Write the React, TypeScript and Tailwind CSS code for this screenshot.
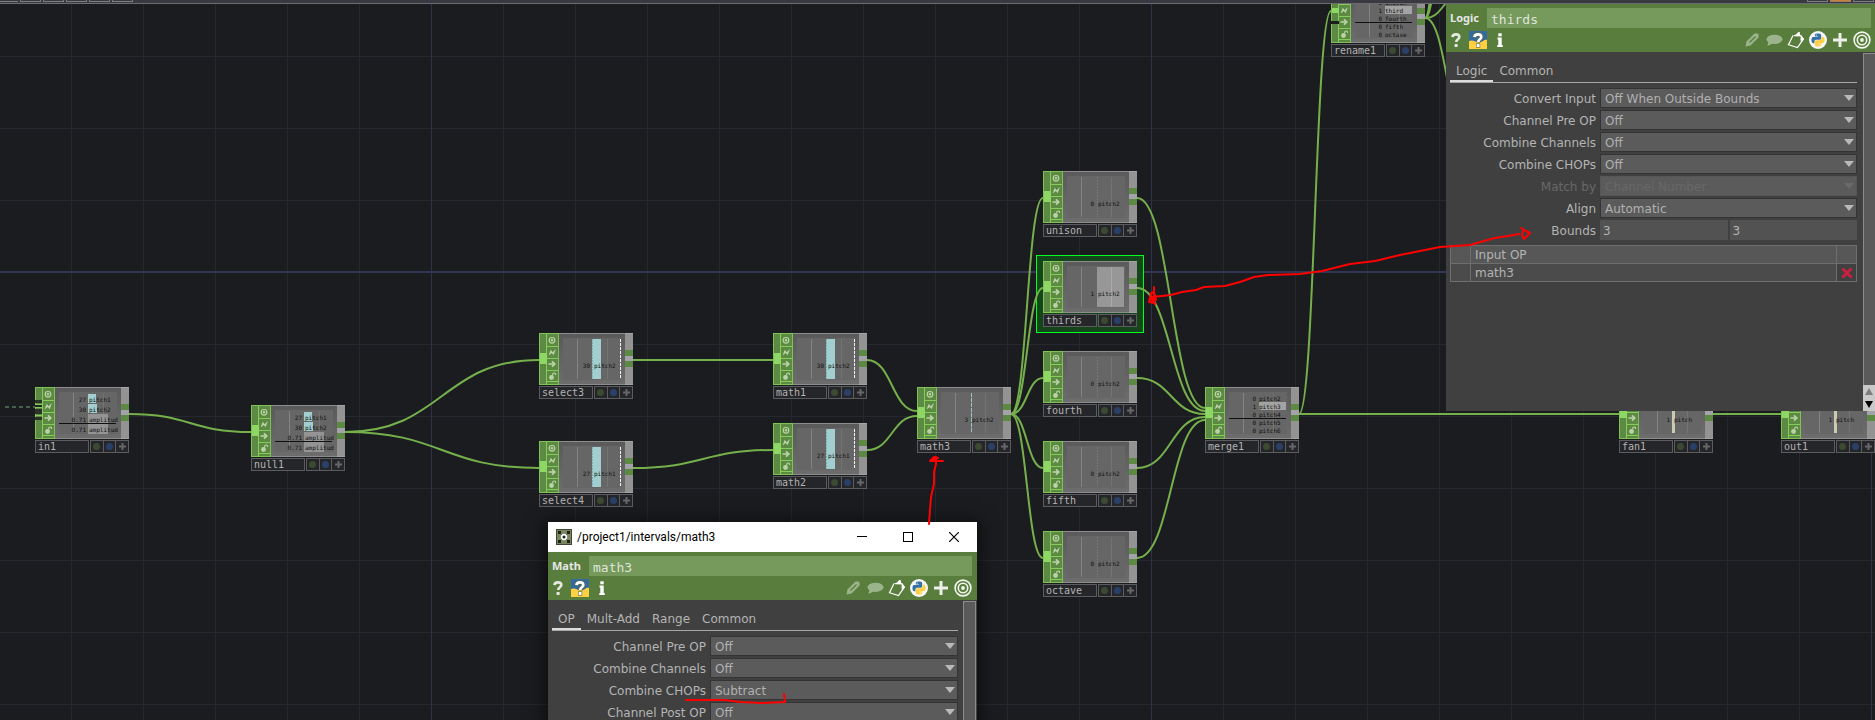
import { useId } from "react";
import type { ReactNode } from "react";

/* ---------- Network nodes ---------- */

type Row = { value: string; name: string; bar?: "cyan" | "grey" | "highlight" };

type NodeSpec = {
  name: string;
  place: string;
  inputs?: "single" | "multi" | "pair";
  value?: string;
  channel?: string;
  fill?: "cyan" | "line" | "grey" | "cream";
  rows?: Row[];
  selected?: boolean;
};

const amplitudeRows: Row[] = [
  { value: "27", name: "pitch1", bar: "cyan" },
  { value: "30", name: "pitch2", bar: "cyan" },
  { value: "0.71", name: "amplitud", bar: "grey" },
  { value: "0.71", name: "amplitud", bar: "grey" },
];

const nodes: NodeSpec[] = [
  { name: "in1", place: "left-[35px] top-[387px]", inputs: "multi", rows: amplitudeRows },
  { name: "null1", place: "left-[251px] top-[405px]", rows: amplitudeRows },
  { name: "select3", place: "left-[539px] top-[333px]", value: "30", channel: "pitch2", fill: "cyan" },
  { name: "select4", place: "left-[539px] top-[441px]", value: "27", channel: "pitch1", fill: "cyan" },
  { name: "math1", place: "left-[773px] top-[333px]", value: "30", channel: "pitch2", fill: "cyan" },
  { name: "math2", place: "left-[773px] top-[423px]", value: "27", channel: "pitch1", fill: "cyan" },
  { name: "math3", place: "left-[917px] top-[387px]", value: "3", channel: "pitch2", fill: "line" },
  { name: "unison", place: "left-[1043px] top-[171px]", value: "0", channel: "pitch2" },
  { name: "thirds", place: "left-[1043px] top-[261px]", value: "1", channel: "pitch2", fill: "grey", selected: true },
  { name: "fourth", place: "left-[1043px] top-[351px]", value: "0", channel: "pitch2" },
  { name: "fifth", place: "left-[1043px] top-[441px]", value: "0", channel: "pitch2" },
  { name: "octave", place: "left-[1043px] top-[531px]", value: "0", channel: "pitch2" },
  {
    name: "merge1",
    place: "left-[1205px] top-[387px]",
    rows: [
      { value: "0", name: "pitch2" },
      { value: "1", name: "pitch3", bar: "highlight" },
      { value: "0", name: "pitch4" },
      { value: "0", name: "pitch5" },
      { value: "0", name: "pitch6" },
    ],
  },
  {
    name: "rename1",
    place: "left-[1331px] top-[-9px]",
    inputs: "pair",
    rows: [
      { value: "0", name: "unison" },
      { value: "1", name: "third", bar: "highlight" },
      { value: "0", name: "fourth" },
      { value: "0", name: "fifth" },
      { value: "0", name: "octave" },
    ],
  },
  { name: "fan1", place: "left-[1619px] top-[387px]", value: "1", channel: "pitch", fill: "cream" },
  { name: "out1", place: "left-[1781px] top-[387px]", value: "1", channel: "pitch", fill: "cream" },
];

function NodeFlags({ inputs }: { inputs: NodeSpec["inputs"] }) {
  return (
    <svg width="20" height="52" className="block shrink-0" aria-hidden="true">
      <rect width="20" height="52" fill="#5d8a42" />
      <rect x="0.5" y="0.5" width="19" height="51" fill="none" stroke="#7fc256" />
      <path d="M7.5 0V52M8 13.5H19M8 25.5H19M8 37.5H19M8 48.5H19" stroke="#86cc5a" fill="none" />
      {inputs === "single" && <rect x="1" y="20" width="7" height="11" fill="#8fd765" />}
      {inputs === "multi" && (
        <g>
          <path d="M0 17.5H7M0 20.5H7M0 28.5H7" stroke="#86cc5a" />
          <rect x="0" y="13" width="7" height="3" fill="#2b3327" />
          <rect x="0" y="18" width="7" height="2" fill="#1f241e" />
          <rect x="0" y="22" width="7" height="5" fill="#2b3327" />
          <rect x="0" y="30" width="7" height="3" fill="#2b3327" />
        </g>
      )}
      {inputs === "pair" && (
        <g>
          <rect x="1" y="17" width="7" height="5" fill="#8fd765" />
          <rect x="0" y="30" width="8" height="3" fill="#1b1f1a" />
        </g>
      )}
      <circle cx="13" cy="7.3" r="2.8" fill="none" stroke="#b9d3a6" strokeWidth="1.2" />
      <circle cx="13" cy="7.3" r="1.2" fill="#b9d3a6" />
      <path d="M9.500 22.500L11.800 16.800L13.600 19.200L17 16L14.600 22.200L12.900 20Z" fill="#b9d3a6" />
      <path d="M9.500 31H15M13 28.300L15.800 31L13 33.700" fill="none" stroke="#b9d3a6" strokeWidth="1.700" />
      <path d="M13.700 42.500V41A1.500 1.500 0 0 1 16.500 40.800V42" fill="none" stroke="#b9d3a6" strokeWidth="1.100" />
      <circle cx="12.500" cy="44.500" r="2.400" fill="#b9d3a6" />
    </svg>
  );
}

function NodeViewer({ node }: { node: NodeSpec }) {
  const clip = useId();
  const many = node.rows !== undefined && node.rows.length === 5;
  const step = many ? 8 : 10;
  const first = many ? 14 : 15;
  return (
    <svg width="66" height="52" className="block flex-1" aria-label={node.name + " viewer"}>
      <defs>
        <linearGradient id={clip + "g"} x1="0" x2="0" y1="0" y2="1">
          <stop offset="0" stopColor="#5a5a5a" />
          <stop offset="1" stopColor="#6d6d6d" />
        </linearGradient>
      </defs>
      <rect width="66" height="52" fill={`url(#${clip}g)`} />
      <path d="M0 0.5H66M0 51.5H66" stroke="#8d8d8d" />
      <rect x="4" y="5" width="58" height="42" fill="#666666" />
      <g fontFamily="'DejaVu Sans Mono', monospace" fontSize="6" fill="#101010">
        <rect x="18" y="6" width="1" height="40" fill="#838383" />
        <rect x="48" y="6" width="1" height="40" fill="#747474" />
        {!node.rows && <path d="M34.500 6V46" stroke="#787878" strokeDasharray="2 1" />}
        {node.fill === "cyan" && (
          <g>
            <rect x="33" y="6" width="9" height="40" fill="#a2cecf" />
            <path d="M33.500 6V46" stroke="#7fb0b1" strokeDasharray="2 1" />
            <path d="M61.500 6V46" stroke="#f4f4f4" strokeDasharray="3 1" />
          </g>
        )}
        {node.fill === "line" && <path d="M34.500 6V46" stroke="#9cc6c6" strokeDasharray="4 1" />}
        {node.fill === "grey" && (
          <g>
            <rect x="34" y="6" width="27" height="40" fill="#979797" />
            <path d="M48.500 6V46" stroke="#aaaaaa" />
          </g>
        )}
        {node.fill === "cream" && <rect x="33" y="6" width="3" height="40" fill="#cbcbb0" />}
        {node.rows?.map((row, i) => {
          const y = first + i * step;
          return (
            <g key={i}>
              {row.bar === "cyan" && <rect x="33" y={y - 8} width={8 + i} height="9" fill="#a2cecf" />}
              {row.bar === "grey" && <rect x="33" y={y - 8} width="20" height="10" fill="#949494" />}
              {row.bar === "highlight" && <rect x="34" y={y - 7} width="27" height="8" fill="#a3a3a3" />}
            </g>
          );
        })}
        {node.rows?.map((row, i) => {
          const y = first + i * step;
          return (
            <g key={i}>
              <text x="31" y={y} textAnchor="end">{row.value}</text>
              <text x="34" y={y}>{row.name}</text>
            </g>
          );
        })}
        {node.rows && <rect x="4" y={many ? 31 : 36} width="57" height="1" fill="#101010" />}
        {node.value && (
          <g>
            <text x="31" y="35" textAnchor="end">{node.value}</text>
            <text x="35" y="35">{node.channel}</text>
          </g>
        )}
      </g>
    </svg>
  );
}

function NodeTile({ node }: { node: NodeSpec }) {
  const tile = (
    <div className="w-[94px]">
      <div className="flex h-[52px]">
        <NodeFlags inputs={node.inputs ?? "single"} />
        <NodeViewer node={node} />
        <div className="flex w-2 shrink-0 flex-col border-t border-b border-[#a5a5a5] bg-[#939393] pt-4">
          <span className="h-1.5 bg-[#5d8a42]" />
          <span className="h-[5px] bg-[#a3a3a9]" />
          <span className="h-1.5 bg-[#5d8a42]" />
        </div>
      </div>
      <div className="mt-px flex h-[13px] gap-px">
        <div className="flex flex-1 items-center border border-[#5c5c60] bg-[#252629] pl-0.5 font-['DejaVu_Sans_Mono',monospace] text-[10px] leading-[11px] text-[#b4b4b4]">
          {node.name}
        </div>
        <div className="flex w-[39px] divide-x divide-[#5c5c60] border border-[#5c5c60] bg-[#252629]">
          <span className="grid flex-1 place-items-center">
            <span className="size-[7px] rounded-full bg-[#3b4a30]" />
          </span>
          <span className="grid flex-1 place-items-center">
            <span className="size-[7px] rounded-full bg-[#2b4068]" />
          </span>
          <span className="grid flex-1 place-items-center">
            <svg width="7" height="7" aria-hidden="true">
              <path d="M3.500 0V7M0 3.500H7" stroke="#67676a" strokeWidth="2" />
            </svg>
          </span>
        </div>
      </div>
    </div>
  );
  return (
    <div className={"absolute " + node.place}>
      {node.selected ? (
        <div className="-mx-[7px] -my-1.5 border border-[#00ff1e] bg-[#15451a] px-1.5 py-[5px]">{tile}</div>
      ) : (
        tile
      )}
    </div>
  );
}

/* ---------- Wires and grid ---------- */

type Wire = [number, number, number, number];

const wires: Wire[] = [
  [129, 414, 251, 432],
  [345, 432, 539, 360],
  [345, 432, 539, 468],
  [633, 360, 773, 360],
  [633, 468, 773, 450],
  [867, 360, 917, 411],
  [867, 450, 917, 416],
  [1011, 414, 1043, 198],
  [1011, 414, 1043, 288],
  [1011, 414, 1043, 378],
  [1011, 414, 1043, 468],
  [1011, 414, 1043, 558],
  [1137, 198, 1205, 408],
  [1137, 288, 1205, 411],
  [1137, 378, 1205, 414],
  [1137, 468, 1205, 417],
  [1137, 558, 1205, 420],
  [1299, 414, 1331, 11],
  [1299, 414, 1619, 414],
  [1713, 414, 1781, 414],
  [1425, 18, 1462, -6],
  [1425, 18, 1444, -60],
  [1425, 18, 1440, -70],
  [1425, 18, 1468, 132],
];

function wirePath([x1, y1, x2, y2]: Wire) {
  const mid = (x1 + x2) / 2;
  return `M${x1} ${y1}C${mid} ${y1} ${mid} ${y2} ${x2} ${y2}`;
}

function Grid() {
  return (
    <svg className="absolute inset-0 h-full w-full" aria-hidden="true">
      <defs>
        <pattern id="minor" x="71" y="56" width="72" height="72" patternUnits="userSpaceOnUse">
          <path d="M0.500 0V72M0 0.500H72" stroke="#26272f" />
        </pattern>
        <pattern id="major" x="431" y="271" width="720" height="720" patternUnits="userSpaceOnUse">
          <path d="M0.500 0V720" stroke="#30314a" />
          <path d="M0 1H720" stroke="#333554" strokeWidth="2" />
        </pattern>
      </defs>
      <rect width="100%" height="100%" fill="url(#minor)" />
      <rect width="100%" height="100%" fill="url(#major)" />
    </svg>
  );
}

function Wires() {
  return (
    <svg className="pointer-events-none absolute inset-0 h-full w-full" aria-hidden="true">
      <g fill="none" stroke="#76b04c" strokeWidth="2">
        {wires.map((w, i) => (
          <path key={i} d={wirePath(w)} />
        ))}
      </g>
      <path d="M5 407H35" stroke="#48604f" strokeWidth="2" strokeDasharray="4 3" />
    </svg>
  );
}

function Annotations() {
  return (
    <svg className="pointer-events-none absolute inset-0 h-full w-full" aria-hidden="true">
      <g fill="none" stroke="#ff0000" strokeWidth="2" strokeLinecap="round" strokeLinejoin="round">
        <path d="M1152 297L1171 295L1182 292L1196 290L1204 287L1225 286L1240 282L1254 277L1268 275L1300 274L1322 271L1350 264L1375 261L1400 255L1425 250L1440 247L1470 245L1484 241L1495 238L1508 236L1519 234" />
        <path d="M1154 287V303L1149 302L1151 293L1154 292L1156 300L1150 298L1155 304" />
        <path d="M1521 228L1526 231L1530 233L1526 237L1524 239L1522 235L1523 231" />
        <path d="M929 524L930 510L931 497L934 484L934 472L936 464L936 457" />
        <path d="M943 461L937 461L930 461L934 457L938 458L930 461" />
        <path d="M686 700H704L725 700L740 702L762 703L785 702L784 694" />
      </g>
    </svg>
  );
}

/* ---------- Parameter panels ---------- */

const pythonBody =
  "M14.25.18l.9.2.73.26.59.3.45.32.34.34.25.34.16.33.1.3.04.26.02.2-.01.13V8.5l-.05.63-.13.55-.21.46-.26.38-.3.31-.33.25-.35.19-.35.14-.33.1-.3.07-.26.04-.21.02H8.77l-.69.05-.59.14-.5.22-.41.27-.33.32-.27.35-.2.36-.15.37-.1.35-.07.32-.04.27-.02.21v3.06H3.17l-.21-.03-.28-.07-.32-.12-.35-.18-.36-.26-.36-.36-.35-.46-.32-.59-.28-.73-.21-.88-.14-1.05-.05-1.23.06-1.22.16-1.04.24-.87.32-.71.36-.57.4-.44.42-.33.42-.24.4-.16.36-.1.32-.05.24-.01h.16l.06.01h8.16v-.83H6.18l-.01-2.75-.02-.37.05-.34.11-.31.17-.28.25-.26.31-.23.38-.2.44-.18.51-.15.58-.12.64-.1.71-.06.77-.04.84-.02 1.27.05zm-6.3 1.98l-.23.33-.08.41.08.41.23.34.33.22.41.09.41-.09.33-.22.23-.34.08-.41-.08-.41-.23-.33-.33-.22-.41-.09-.41.09z";

function IconButton({ label, children }: { label: string; children: ReactNode }) {
  return (
    <button type="button" aria-label={label} className="grid size-[18px] place-items-center">
      <svg width="18" height="18" viewBox="0 0 18 18" fill="none" aria-hidden="true">
        {children}
      </svg>
    </button>
  );
}

const questionMark = "M5.4 6.2C5.6 3.8 7.2 3.4 9 3.4C11 3.4 12.3 4.4 12.3 6.1C12.3 8.3 9.2 8.4 9.2 11";

function PanelHeader({ id, type, name, edge }: { id: string; type: string; name: string; edge: string }) {
  return (
    <div className={"h-12 bg-[#587d3d] pt-1 " + edge}>
      <div className="flex h-5 items-center pl-1">
        <label
          htmlFor={id}
          className="w-[37px] shrink-0 font-['Noto_Sans',sans-serif] text-[11px] leading-5 font-bold text-[#e6e6e6]"
        >
          {type}
        </label>
        <input
          id={id}
          defaultValue={name}
          className="h-5 min-w-0 flex-1 bg-[#76995c] px-1 pt-0.5 font-['DejaVu_Sans_Mono',monospace] text-[13px] leading-[18px] text-[#dfe6d9] outline-none"
        />
      </div>
      <div className="flex justify-between pt-[3px] pl-px">
        <div className="flex gap-1">
          <IconButton label="Help">
            <path d={questionMark} stroke="#e4e9df" strokeWidth="2.600" />
            <rect x="7.600" y="13" width="3" height="3" fill="#e4e9df" />
          </IconButton>
          <IconButton label="Python help">
            <rect width="18" height="18" fill="#356a9e" />
            <path d="M0 10C4 8 7 12 11 11.500C14 11 15 8 18 9V18H0Z" fill="#ffd140" />
            <path d={questionMark} stroke="#5b6a50" strokeWidth="4.400" />
            <path d={questionMark} stroke="#ffffff" strokeWidth="2.600" />
            <rect x="7" y="12.400" width="4.200" height="4.200" fill="#5b6a50" />
            <rect x="7.600" y="13" width="3" height="3" fill="#ffffff" />
          </IconButton>
          <IconButton label="Information">
            <rect x="7.300" y="2.300" width="3.400" height="3" fill="#ffffff" />
            <path d="M6.500 6.500H10.700V14H11.700V16H6.300V14H7.300V8.500H6.500Z" fill="#ffffff" />
          </IconButton>
        </div>
        <div className="flex gap-1">
          <IconButton label="Edit">
            <path d="M2.500 15.500L3.500 10.500L11.500 2.500H14.500L15.500 3.500V6.500L7.500 14.500Z" fill="#9cb48b" />
            <path d="M6.500 11.500L12.500 5.500" stroke="#587d3d" strokeWidth="1.200" />
          </IconButton>
          <IconButton label="Comment">
            <ellipse cx="9.500" cy="8.300" rx="8" ry="4.600" fill="#9cb48b" />
            <path d="M3.500 10L2.500 15L8.500 12Z" fill="#9cb48b" />
          </IconButton>
          <IconButton label="Copy parameters">
            <path d="M6 4.500L1.500 13.700L10.500 16.500L16.300 8.200L13.500 4.200" stroke="#ffffff" strokeWidth="1.200" />
            <path d="M6 4.500L9 3.500L11.500 0.800L13 1.500V3.500L14.500 5.500L7.500 5.300Z" fill="#ffffff" />
            <path d="M14 4.500L17 8L14 12L13.500 8Z" fill="#ffffff" />
          </IconButton>
          <IconButton label="Python parameters">
            <circle cx="9" cy="9" r="9" fill="#f7f7f7" />
            <g transform="translate(2.500 2.500) scale(0.542)">
              <path d={pythonBody} fill="#3571a5" />
              <path d={pythonBody} fill="#ffcf43" transform="rotate(180 12 12)" />
            </g>
          </IconButton>
          <IconButton label="Add">
            <path d="M9 2V16M2 9H16" stroke="#ecf0e9" strokeWidth="3" />
          </IconButton>
          <IconButton label="Target">
            <circle cx="9" cy="9" r="7.900" stroke="#f1f4ef" strokeWidth="1.600" />
            <circle cx="9" cy="9" r="4.700" stroke="#f1f4ef" strokeWidth="1.600" />
            <circle cx="9" cy="9" r="1.900" fill="#f1f4ef" />
          </IconButton>
        </div>
      </div>
    </div>
  );
}

function Tabs({ items }: { items: string[] }) {
  return (
    <div role="tablist" className="flex h-[31px] items-end border-b border-[#a8a8a8]">
      {items.map((t, i) => (
        <button
          key={t}
          type="button"
          role="tab"
          aria-selected={i === 0}
          className={
            "h-5 border-b-2 px-1.5 text-[12px] leading-[18px] text-[#b4b4b4] " +
            (i === 0 ? "border-[#dcdcdc]" : "border-transparent")
          }
        >
          {t}
        </button>
      ))}
    </div>
  );
}

type Param = { label: string; value: string; disabled?: boolean };

function ParamRow({ prefix, param, labelWidth }: { prefix: string; param: Param; labelWidth: string }) {
  const id = prefix + "-" + param.label.toLowerCase().replaceAll(" ", "-");
  return (
    <div className="flex h-5 items-center">
      <label
        htmlFor={id}
        className={
          labelWidth + " shrink-0 pt-0.5 pr-1 text-right " + (param.disabled ? "text-[#686868]" : "text-[#b4b4b4]")
        }
      >
        {param.label}
      </label>
      <div className="relative min-w-0 flex-1">
        <select
          id={id}
          disabled={param.disabled}
          className={
            "block h-5 w-full appearance-none border bg-[#5b5b5b] px-1 pt-0.5 text-[12px] leading-4 opacity-100 outline-none " +
            (param.disabled ? "border-[#565656] text-[#686868]" : "border-[#343434] text-[#b0b0b0]")
          }
        >
          <option>{param.value}</option>
        </select>
        <svg className="pointer-events-none absolute top-[7px] right-[3px]" width="10" height="6" aria-hidden="true">
          <path d="M0 0H10L5 6Z" fill={param.disabled ? "#6a6a6a" : "#b9b9b9"} />
        </svg>
      </div>
    </div>
  );
}

const logicParams: Param[] = [
  { label: "Convert Input", value: "Off When Outside Bounds" },
  { label: "Channel Pre OP", value: "Off" },
  { label: "Combine Channels", value: "Off" },
  { label: "Combine CHOPs", value: "Off" },
  { label: "Match by", value: "Channel Number", disabled: true },
  { label: "Align", value: "Automatic" },
];

const mathParams: Param[] = [
  { label: "Channel Pre OP", value: "Off" },
  { label: "Combine Channels", value: "Off" },
  { label: "Combine CHOPs", value: "Subtract" },
  { label: "Channel Post OP", value: "Off" },
];

function LogicPanel() {
  return (
    <section className="absolute top-1 right-0 flex h-[407px] w-[429px] flex-col bg-[#404040] font-['DejaVu_Sans',sans-serif] text-[12px] leading-5">
      <PanelHeader id="logic-name" type="Logic" name="thirds" edge="pr-1" />
      <div className="flex min-h-0 flex-1">
        <div className="min-w-0 flex-1 pr-1.5 pl-1">
          <Tabs items={["Logic", "Common"]} />
          <div className="flex flex-col gap-0.5 pt-[5px]">
            {logicParams.map((p) => (
              <ParamRow key={p.label} prefix="logic" param={p} labelWidth="w-[150px]" />
            ))}
            <div className="flex h-5 items-center">
              <label htmlFor="bounds-low" className="w-[150px] shrink-0 pt-0.5 pr-1 text-right text-[#b4b4b4]">
                Bounds
              </label>
              <div className="flex min-w-0 flex-1 gap-0.5">
                <input
                  id="bounds-low"
                  defaultValue="3"
                  className="h-5 w-0 flex-1 bg-[#525252] px-[3px] pt-0.5 text-[12px] text-[#b4b4b4] outline-none"
                />
                <input
                  aria-label="Bounds upper"
                  defaultValue="3"
                  className="h-5 w-0 flex-1 bg-[#525252] px-[3px] pt-0.5 text-[12px] text-[#b4b4b4] outline-none"
                />
              </div>
            </div>
          </div>
          <table className="mt-[5px] w-full table-fixed border-collapse text-left text-[#b4b4b4]">
            <thead>
              <tr className="h-[18px] bg-[#575757]">
                <th className="w-5 border border-[#6e6e6e] p-0" />
                <th className="border border-[#6e6e6e] p-0 pt-0.5 pl-1 leading-[15px] font-normal">Input OP</th>
                <th className="w-5 border border-[#6e6e6e] p-0" />
              </tr>
            </thead>
            <tbody>
              <tr className="h-[18px] bg-[#4b4b4b]">
                <td className="border border-[#6e6e6e] p-0" />
                <td className="border border-[#6e6e6e] p-0 pt-0.5 pl-1 leading-[15px]">math3</td>
                <td className="border border-[#6e6e6e] bg-[#404040] p-0">
                  <button type="button" aria-label="Remove input" className="mx-auto block">
                    <svg width="12" height="12" className="block" aria-hidden="true">
                      <path d="M1.500 1.500L10.500 10.500M10.500 1.500L1.500 10.500" stroke="#c8203f" strokeWidth="3" />
                    </svg>
                  </button>
                </td>
              </tr>
            </tbody>
          </table>
        </div>
        <div className="flex w-3 flex-col pt-px">
          <div className="flex-1 border-t border-l border-[#8c8c8c] bg-[#5a5a5a]" />
          <div className="flex h-[26px] flex-col items-center justify-around bg-[#c9c9c9]">
            <svg width="8" height="7" aria-hidden="true">
              <path d="M4 0L8 7H0Z" fill="#7d7d7d" />
            </svg>
            <svg width="8" height="7" aria-hidden="true">
              <path d="M0 0H8L4 7Z" fill="#000000" />
            </svg>
          </div>
        </div>
      </div>
    </section>
  );
}

function MathWindow() {
  return (
    <section className="absolute top-[522px] left-[548px] flex h-[300px] w-[429px] flex-col bg-[#404040] font-['DejaVu_Sans',sans-serif] text-[12px] leading-5 shadow-[0_2px_16px_4px_rgba(0,0,0,0.5)]">
      <div className="flex h-[30px] items-center bg-white pl-2">
        <svg width="16" height="16" viewBox="0 0 16 16" aria-hidden="true">
          <rect width="16" height="16" fill="#3f4730" />
          <rect x="1" y="1" width="14" height="14" fill="#7a8660" />
          <path d="M3 3L13 13M13 3L3 13" stroke="#1d2118" strokeWidth="1" />
          <path d="M2 2H5V5H2ZM11 2H14V5H11ZM2 11H5V14H2ZM11 11H14V14H11Z" fill="#1d2118" />
          <circle cx="8" cy="8" r="3.200" fill="#ffffff" />
          <circle cx="8" cy="8" r="1.500" fill="#1d2118" />
        </svg>
        <h2 className="flex-1 pl-[5px] font-['Roboto',sans-serif] text-[12px] text-black">/project1/intervals/math3</h2>
        <button type="button" aria-label="Minimize" className="grid h-[30px] w-[46px] place-items-center">
          <svg width="10" height="10" aria-hidden="true">
            <path d="M0 4.500H10" stroke="#000000" />
          </svg>
        </button>
        <button type="button" aria-label="Maximize" className="grid h-[30px] w-[46px] place-items-center">
          <svg width="10" height="10" aria-hidden="true">
            <rect x="0.500" y="0.500" width="9" height="9" fill="none" stroke="#000000" />
          </svg>
        </button>
        <button type="button" aria-label="Close" className="grid h-[30px] w-[46px] place-items-center">
          <svg width="10" height="10" aria-hidden="true">
            <path d="M0 0L10 10M10 0L0 10" stroke="#000000" strokeWidth="1.200" />
          </svg>
        </button>
      </div>
      <PanelHeader id="math-name" type="Math" name="math3" edge="pr-[5px]" />
      <div className="flex min-h-0 flex-1">
        <div className="min-w-0 flex-1 pr-[5px] pl-1">
          <Tabs items={["OP", "Mult-Add", "Range", "Common"]} />
          <div className="flex flex-col gap-0.5 pt-[5px]">
            {mathParams.map((p) => (
              <ParamRow key={p.label} prefix="math" param={p} labelWidth="w-[158px]" />
            ))}
          </div>
        </div>
        <div className="mt-px mr-px w-[13px] border border-[#8c8c8c] bg-[#5a5a5a]" />
      </div>
    </section>
  );
}

/* ---------- Page ---------- */

function TopBar() {
  return (
    <header className="relative flex h-1 justify-between border-b border-[#6c6c70] bg-[#393a41]">
      <div className="flex gap-0.5">
        <span className="h-0.5 w-[18px] border-b border-[#7d7d80]" />
        {[0, 1, 2, 3, 4].map((i) => (
          <span key={i} className="h-0.5 w-[21px] border-x border-b border-[#7d7d80]" />
        ))}
      </div>
      <div className="flex gap-0.5 pr-px">
        <span className="h-0.5 w-[21px] border-x border-b border-[#7d7d80]" />
        <span className="h-0.5 w-[21px] border-x border-b border-[#a08060] bg-[#c8813c]" />
        <span className="h-0.5 w-[21px] border-x border-b border-[#7d7d80]" />
      </div>
    </header>
  );
}

export default function App() {
  return (
    <main className="relative h-screen overflow-hidden bg-[#1b1c1f]">
      <Grid />
      {nodes.map((n) => (
        <NodeTile key={n.name} node={n} />
      ))}
      <Wires />
      <TopBar />
      <LogicPanel />
      <MathWindow />
      <Annotations />
    </main>
  );
}
